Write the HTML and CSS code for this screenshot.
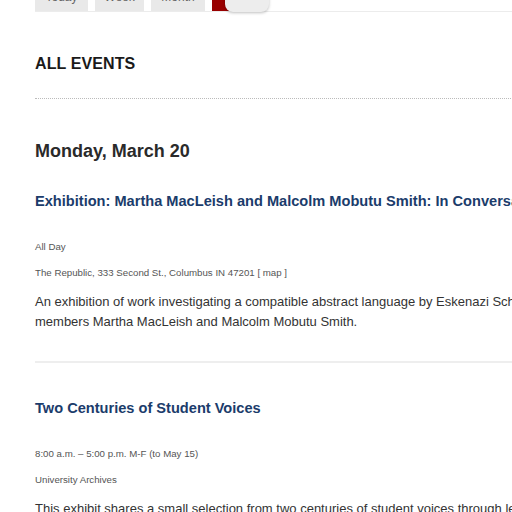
FILE: index.html
```html
<!DOCTYPE html>
<html lang="en">
<head>
<meta charset="utf-8">
<title>All Events</title>
<link rel="stylesheet" href="styles.css">
</head>
<body>
<div class="page">
  <nav class="tabs">
    <span class="tab tab-today">Today</span>
    <span class="tab tab-week">Week</span>
    <span class="tab tab-month">Month</span>
    <span class="tab tab-active">All</span>
    <span class="toggle"></span>
  </nav>

  <h2 class="section-title">ALL EVENTS</h2>

  <h3 class="day">Monday, March 20</h3>

  <article class="event event-first">
    <h4 class="event-title">Exhibition: Martha MacLeish and Malcolm Mobutu Smith: In Conversation</h4>
    <p class="meta">All Day</p>
    <p class="meta">The Republic, 333 Second St., Columbus IN 47201 [ map ]</p>
    <p class="desc">An exhibition of work investigating a compatible abstract language by Eskenazi School faculty<br>members Martha MacLeish and Malcolm Mobutu Smith.</p>
  </article>

  <article class="event event-next">
    <h4 class="event-title">Two Centuries of Student Voices</h4>
    <p class="meta">8:00 a.m. – 5:00 p.m. M-F (to May 15)</p>
    <p class="meta">University Archives</p>
    <p class="desc">This exhibit shares a small selection from two centuries of student voices through letters, diaries and publications.</p>
  </article>
</div>
</body>
</html>
```

FILE: styles.css
```css
html, body {
  margin: 0;
  padding: 0;
  background: #fff;
  overflow: hidden;
}
body {
  font-family: "Liberation Sans", Arial, sans-serif;
  color: #222;
}
.page {
  width: 760px;
  padding-left: 35px;
}
.tabs {
  position: relative;
  display: flex;
  gap: 7px;
  margin-top: -14px;
  height: 25px;
  border-bottom: 1px solid #ececec;
}
.tab {
  width: 53px;
  background: #e9e9e9;
  color: #666;
  font-size: 12px;
  line-height: 22px;
  text-align: center;
}
.tab-week { width: 49px; }
.tab-month { width: 54px; }
.tab-active {
  background: #990000;
  color: #fff;
  width: 50px;
}
.toggle {
  position: absolute;
  left: 190px;
  top: 0;
  width: 44px;
  height: 26px;
  background: #ededed;
  border-radius: 0 0 8px 8px;
  box-shadow: 0 1px 3px rgba(0,0,0,0.25);
}
.section-title {
  margin: 0;
  padding: 42px 0 24px;
  font-size: 16px;
  line-height: 20px;
  font-weight: 700;
  letter-spacing: 0.1px;
  color: #1a1a1a;
  border-bottom: 1px dotted #bbb;
}
.day {
  margin: 0;
  padding-top: 40px;
  font-size: 18px;
  line-height: 24px;
  font-weight: 700;
  color: #2a2a2a;
}
.event {
  padding-top: 29px;
}
.event-title {
  margin: 0 0 30px;
  font-size: 14.6px;
  line-height: 18px;
  font-weight: 700;
  color: #1b3c6b;
  white-space: nowrap;
}
.meta {
  margin: 0 0 13px;
  font-size: 9.7px;
  line-height: 13px;
  color: #555;
}
.desc {
  margin: 0;
  font-size: 13px;
  line-height: 20px;
  color: #333;
  white-space: nowrap;
}
.event-first {
  padding-bottom: 29px;
  border-bottom: 2px solid #eeeeee;
}
.event-next {
  padding-top: 36px;
}
```
